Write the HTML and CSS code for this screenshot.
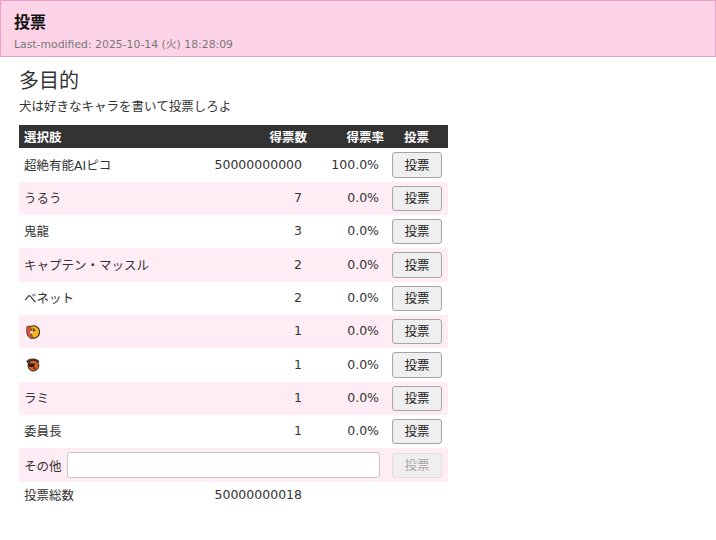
FILE: index.html
```html
<!DOCTYPE html>
<html lang="ja">
<head>
<meta charset="utf-8">
<title>投票</title>
<link rel="stylesheet" href="styles.css">
</head>
<body>
<header class="page-head">
  <h1 class="page-title">投票</h1>
  <p class="modified">Last-modified: 2025-10-14 (火) 18:28:09</p>
</header>
<main class="content">
  <h2 class="poll-title">多目的</h2>
  <p class="poll-desc">犬は好きなキャラを書いて投票しろよ</p>
  <table class="poll">
    <thead>
      <tr><th class="c-name">選択肢</th><th class="c-num">得票数</th><th class="c-rate">得票率</th><th class="c-act">投票</th></tr>
    </thead>
    <tbody>
      <tr><td class="c-name">超絶有能AIピコ</td><td class="c-num">50000000000</td><td class="c-rate">100.0%</td><td class="c-act"><button class="vote">投票</button></td></tr>
      <tr><td class="c-name">うるう</td><td class="c-num">7</td><td class="c-rate">0.0%</td><td class="c-act"><button class="vote">投票</button></td></tr>
      <tr><td class="c-name">鬼龍</td><td class="c-num">3</td><td class="c-rate">0.0%</td><td class="c-act"><button class="vote">投票</button></td></tr>
      <tr><td class="c-name">キャプテン・マッスル</td><td class="c-num">2</td><td class="c-rate">0.0%</td><td class="c-act"><button class="vote">投票</button></td></tr>
      <tr><td class="c-name">ベネット</td><td class="c-num">2</td><td class="c-rate">0.0%</td><td class="c-act"><button class="vote">投票</button></td></tr>
      <tr><td class="c-name"><svg class="emblem" viewBox="0 0 14 14"><circle cx="7.4" cy="7" r="6.2" fill="#f5b81c" stroke="#3d2c10" stroke-width="1.1"/><path d="M.9 1.6 C.2 6 .8 11 4.6 13.4 L7.4 13 C5.4 11 5.2 9 6.4 6.6 L3.6 1 Z" fill="#d9553a" stroke="#64301a" stroke-width=".8"/><circle cx="5.6" cy="7.2" r="1.2" fill="#fff"/><path d="M6.4 2.4 L9.6 5.2 L7.6 6.8 Z" fill="#3d2c10"/></svg></td><td class="c-num">1</td><td class="c-rate">0.0%</td><td class="c-act"><button class="vote">投票</button></td></tr>
      <tr><td class="c-name"><svg class="emblem" viewBox="0 0 14 14"><ellipse cx="6.8" cy="3.4" rx="6.4" ry="2.8" fill="#4a3a34"/><circle cx="7.4" cy="7.6" r="5.4" fill="#dc6428" stroke="#2c1a12" stroke-width="1"/><path d="M2 5.6 L9.4 5.6 L7.6 9 L3.6 9 Z" fill="#2c1a12"/><circle cx="8.4" cy="10" r="1.5" fill="#8f2f12"/></svg></td><td class="c-num">1</td><td class="c-rate">0.0%</td><td class="c-act"><button class="vote">投票</button></td></tr>
      <tr><td class="c-name">ラミ</td><td class="c-num">1</td><td class="c-rate">0.0%</td><td class="c-act"><button class="vote">投票</button></td></tr>
      <tr><td class="c-name">委員長</td><td class="c-num">1</td><td class="c-rate">0.0%</td><td class="c-act"><button class="vote">投票</button></td></tr>
      <tr class="other"><td colspan="3" class="c-name"><div class="other-field"><span>その他</span><input class="other-input" type="text"></div></td><td class="c-act"><button class="vote" disabled>投票</button></td></tr>
      <tr class="total"><td class="c-name">投票総数</td><td class="c-num">50000000018</td><td></td><td></td></tr>
    </tbody>
  </table>
</main>
</body>
</html>
```
FILE: styles.css
```css
* { box-sizing: border-box; }
html, body { margin: 0; padding: 0; background: #fff; }
body {
  font-family: "DejaVu Sans", "Noto Sans CJK JP", sans-serif;
  font-size: 12.5px;
  color: #333;
}
.page-head {
  height: 57px;
  padding: 13px 13px 0;
  background: #fdd4e7;
  border: 1px solid #e9a0c6;
}
.page-title {
  margin: 0;
  font-size: 16px;
  line-height: 18px;
  font-weight: 700;
  color: #111;
}
.modified {
  margin: 6px 0 0;
  font-size: 10.85px;
  line-height: 14px;
  color: #777;
}
.content { padding: 0 19px; }
.poll-title {
  margin: 0;
  padding-top: 12px;
  font-size: 20px;
  line-height: 24px;
  font-weight: 400;
  color: #333;
}
.poll-desc {
  margin: 6px 0 0;
  line-height: 16px;
}
.poll {
  width: 429px;
  margin-top: 10px;
  border-collapse: collapse;
  table-layout: fixed;
}
.poll th {
  height: 23.38px;
  padding: 0 1px 0 5px;
  background: #333;
  color: #fff;
  font-weight: 700;
}
.poll td {
  height: 33.35px;
  padding: 0 6px 2px 5px;
}
.poll tbody tr:nth-child(even) { background: #ffedf5; }
.poll tbody tr.total { background: #fff; }
.poll tr.total td { height: 24px; padding-bottom: 0; }
.poll tr.other td { height: 34px; padding-bottom: 0; }
.c-name { text-align: left; width: 190px; }
.c-num { text-align: right; width: 99px; }
.c-rate { text-align: right; width: 77px; }
.poll th.c-act { text-align: center; padding: 0 6px; }
.poll td.c-act { padding: 0 6px; }
.poll tr.other td.c-name { padding-right: 5px; }
.vote {
  display: block;
  width: 50px;
  height: 25.4px;
  margin: 0 0 0 auto;
  padding: 0 0 2px;
  font: 12.5px "DejaVu Sans", "Noto Sans CJK JP", sans-serif;
  color: #222;
  background: #efefef;
  border: 1px solid #a6a6a6;
  border-radius: 3px;
}
.vote:disabled {
  color: #a8a8a8;
  background: #f1eef0;
  border-color: #e2dde0;
}
.other-field { display: flex; align-items: center; gap: 5px; }
.other-input {
  flex: 1;
  min-width: 0;
  height: 26px;
  border: 1px solid #c8c8c8;
  border-radius: 3px;
  background: #fff;
}
.emblem { display: block; width: 14px; height: 14px; margin: 2px 0 0 2px; }
```
